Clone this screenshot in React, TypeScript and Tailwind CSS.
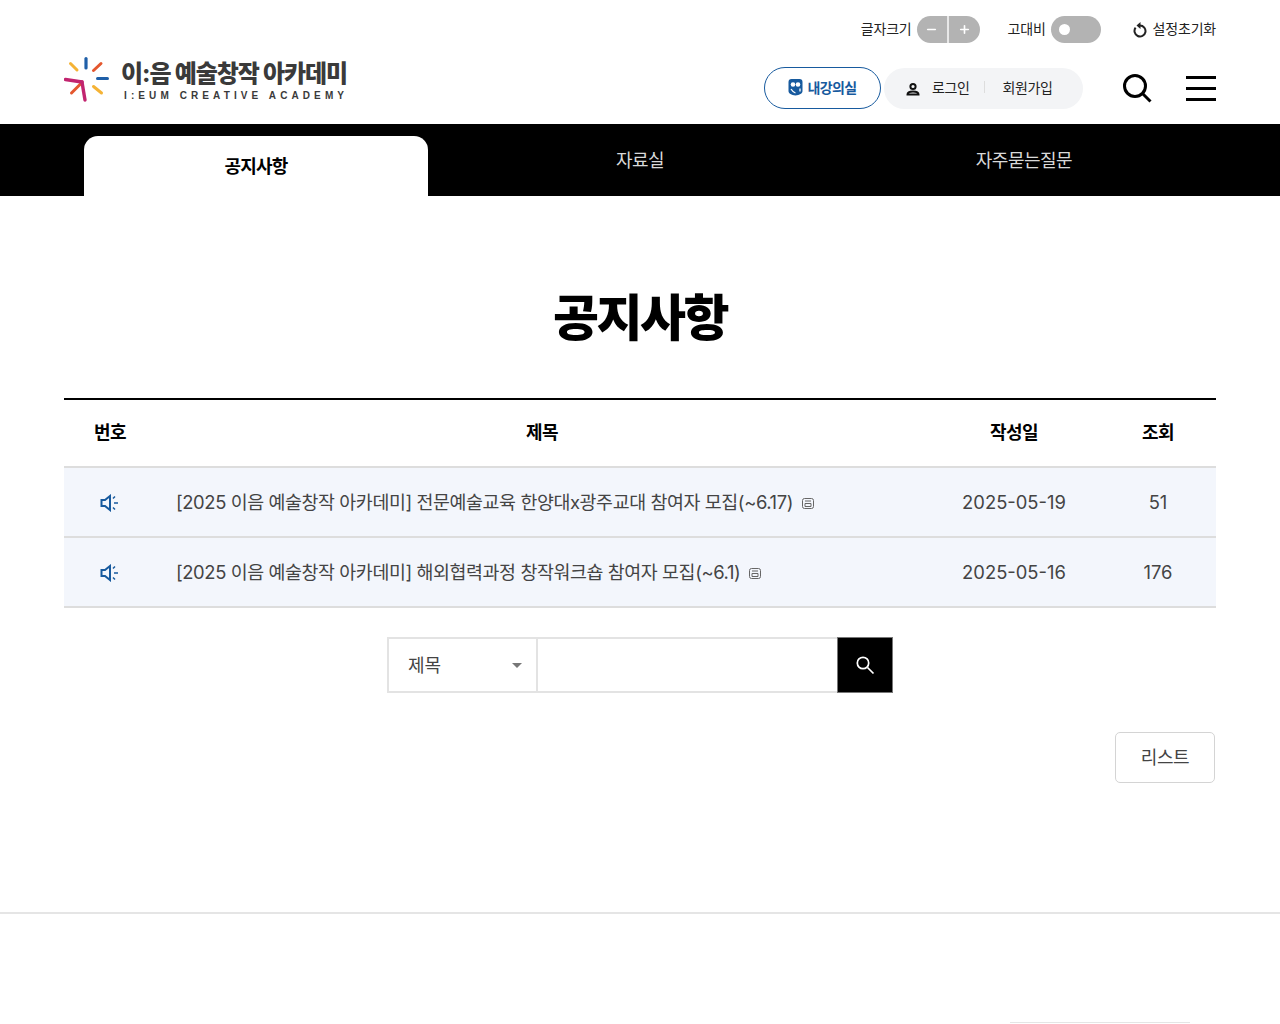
import { Minus, Plus } from 'lucide-react';

const font = { fontFamily: 'Inter, "Noto Sans CJK KR", sans-serif' };

const rows = [
  { title: '[2025 이음 예술창작 아카데미] 전문예술교육 한양대x광주교대 참여자 모집(~6.17)', date: '2025-05-19', views: '51' },
  { title: '[2025 이음 예술창작 아카데미] 해외협력과정 창작워크숍 참여자 모집(~6.1)', date: '2025-05-16', views: '176' },
];

const Logo = () => (
  <div className="flex items-start gap-[13px]">
    <svg width="45" height="46" viewBox="0 0 45 46" fill="none" strokeLinecap="round" strokeWidth="3">
      <path d="M22 2.500V12" stroke="#1f5fa8" strokeWidth="3.200" />
      <path d="M6.500 7.500l6.500 6.500" stroke="#f5b335" />
      <path d="M37 7.500l-7.500 7" stroke="#e4572e" />
      <path d="M33.500 22.500h10" stroke="#1f5fa8" />
      <path d="M29.500 30.500l8 6.500" stroke="#f5b335" />
      <path d="M7.500 37L17 27.500" stroke="#e4572e" />
      <path d="M1.500 23.500L18 26" stroke="#c2246f" strokeWidth="3.400" />
      <path d="M18 26l3 18" stroke="#c2246f" strokeWidth="3.400" />
    </svg>
    <div className="flex flex-col mt-[4px] -ml-[1px]">
      <span className="text-[24px] leading-[28px] font-extrabold tracking-[-1.050px] text-[#3a3a3a]">이:음 예술창작 아카데미</span>
      <span className="mt-[2px] pl-[3px] text-[10px] leading-[12px] font-bold tracking-[4.100px] text-[#3a3a3a] whitespace-nowrap" style={{ fontFamily: '"Liberation Sans", sans-serif' }}>
        I:EUM CREATIVE ACADEMY
      </span>
    </div>
  </div>
);

const ResetIcon = () => (
  <svg width="16" height="17" viewBox="0 0 16 17" fill="none" className="ml-[31px]">
    <path d="M8 4.500a5.500 5.500 0 1 1-4.400 2.200" stroke="#222" strokeWidth="2" />
    <path d="M8.500 1L4.500 4.500 8.500 8z" fill="#222" />
  </svg>
);

const TopBar = () => (
  <div className="flex justify-end items-center h-[27px] text-[14px] tracking-[-0.2px] text-[#222]">
    <span className="pb-[2px]">글자크기</span>
    <div className="ml-[5px] flex items-center w-[63px] h-[27px] rounded-full bg-[#b3b3b3] text-white">
      <span className="flex-1 h-full flex items-center justify-center border-r-2 border-white/70"><Minus size={13} strokeWidth={3} /></span>
      <span className="flex-1 h-full flex items-center justify-center"><Plus size={13} strokeWidth={3} /></span>
    </div>
    <span className="ml-[28px] pb-[2px]">고대비</span>
    <div className="ml-[5px] flex items-center w-[50px] h-[27px] rounded-full bg-[#b3b3b3] pl-[8px]">
      <span className="w-[11px] h-[11px] rounded-full bg-white" />
    </div>
    <ResetIcon />
    <span className="ml-[5px] pb-[2px]">설정초기화</span>
  </div>
);

const Header = () => (
  <header className="h-[124px] px-16 pt-4">
    <TopBar />
    <div className="flex items-start justify-between mt-[13px]">
      <Logo />
      <div className="flex items-center mt-[11px]">
        <button className="flex items-center justify-center w-[117px] h-[42px] pb-[2px] rounded-full border border-[#175a9e] text-[14px] font-bold tracking-[-0.6px] text-[#175a9e]">
          <svg width="15" height="18" viewBox="0 0 15 18" className="mr-[4px]">
            <path d="M3.500 1h8A3 3 0 0 1 14.500 4v9c0 2.500-3 4-7 4.500C3.500 17 .5 15.500 .5 13V4a3 3 0 0 1 3-3z" fill="#175a9e" />
            <circle cx="5" cy="6.500" r="2.300" fill="#fff" />
            <circle cx="10" cy="6.500" r="2.300" fill="#fff" />
            <path d="M3 11c1.500 2.500 3 3.500 4.500 4M12 10.500v3" stroke="#fff" strokeWidth="1.300" fill="none" />
          </svg>
          내강의실
        </button>
        <div className="ml-[3px] flex items-center w-[199px] h-[41px] pb-[2px] rounded-full bg-[#f3f4f6] pl-[22px] text-[14px] tracking-[-0.4px] text-[#222]">
          <svg width="14" height="14" viewBox="0 0 14 14" fill="none" stroke="#111" strokeWidth="2" className="mt-[3px]">
            <circle cx="7" cy="4.500" r="2.600" />
            <path d="M1.500 12.500c0-2 2-3 5.500-3s5.500 1 5.500 3z" />
          </svg>
          <span className="ml-[12px]">로그인</span>
          <span className="ml-[15px] w-px h-[12px] bg-[#ddd]" />
          <span className="ml-[17px]">회원가입</span>
        </div>
        <svg className="ml-[39px]" width="30" height="30" viewBox="0 0 30 30" fill="none" stroke="#000" strokeWidth="3">
          <circle cx="13" cy="13" r="10.500" />
          <path d="M20.500 20.500L28.500 28.500" />
        </svg>
        <div className="ml-[34px] flex flex-col gap-[8px] w-[30px]">
          <span className="h-[3px] bg-black" />
          <span className="h-[3px] bg-black" />
          <span className="h-[3px] bg-black" />
        </div>
      </div>
    </div>
  </header>
);

const Nav = () => (
  <nav className="h-[72px] bg-black px-16 grid grid-cols-3">
    <div className="px-5 pt-3">
      <div className="h-full rounded-t-[14px] bg-white flex items-center justify-center text-[18px] font-bold tracking-[-0.8px] text-black">공지사항</div>
    </div>
    <div className="flex justify-center pt-[25px] text-[18px] leading-[24px] tracking-[-0.5px] text-[#d9d9d9]">자료실</div>
    <div className="flex justify-center pt-[25px] text-[18px] leading-[24px] tracking-[-0.5px] text-[#d9d9d9]">자주묻는질문</div>
  </nav>
);

const Speaker = () => (
  <svg width="20" height="18" viewBox="0 0 20 18" fill="none" stroke="#175a9e" strokeWidth="2" className="mx-auto">
    <path d="M1.500 6h3.500l5-4v14l-5-4H1.500z" />
    <path d="M13 4.500l2-2M14 9h4M13 13.500l2 2" strokeWidth="1.500" />
  </svg>
);

const FileIcon = () => (
  <svg width="12" height="11" viewBox="0 0 12 11" fill="none" stroke="#666" strokeWidth="1" className="inline-block ml-[9px]">
    <rect x="0.500" y="0.500" width="11" height="10" rx="2" />
    <path d="M3 3h6M3 5.500h6v3H3z" />
  </svg>
);

const App = () => (
  <div className="min-h-[1024px] bg-white overflow-hidden" style={font}>
    <Header />
    <Nav />
    <main className="px-16">
      <h1 className="mt-[91px] text-center text-[50px] leading-[62px] font-extrabold tracking-[-2.500px] text-black">공지사항</h1>
      <div className="mt-[49px] border-t-2 border-black">
        <div className="grid grid-cols-[92px_772px_172px_116px] h-[68px] pb-[2px] items-center border-b-2 border-[#ddd] text-center text-[18px] font-bold tracking-[-0.6px] text-black">
          <span>번호</span>
          <span>제목</span>
          <span>작성일</span>
          <span>조회</span>
        </div>
        {rows.map((r) => (
          <div key={r.date} className="grid grid-cols-[92px_772px_172px_116px] h-[70px] pt-[1px] items-center border-b-2 border-[#ddd] bg-[#f3f6fc] text-[18.400px] text-[#444]">
            <Speaker />
            <div className="pl-[20px] tracking-[-0.4px] whitespace-nowrap">
              {r.title}
              <FileIcon />
            </div>
            <span className="text-center">{r.date}</span>
            <span className="text-center">{r.views}</span>
          </div>
        ))}
      </div>
      <div className="mt-[29px] flex justify-center">
        <div className="flex w-[506px] h-[56px]">
          <div className="w-[151px] border-2 border-[#e3e3e3] flex items-center justify-between pl-[19px] pr-[14px] text-[18px] text-[#444]">
            <span>제목</span>
            <span className="w-0 h-0 border-x-[5px] border-x-transparent border-t-[5px] border-t-[#777]" />
          </div>
          <div className="w-[299px] border-y-2 border-[#e3e3e3]" />
          <button className="w-[56px] bg-black border border-[#777] flex items-center justify-center">
            <svg width="20" height="20" viewBox="0 0 20 20" fill="none" stroke="#fff" strokeWidth="1.700">
              <circle cx="8" cy="8" r="5.700" />
              <path d="M12.500 12.500L18.500 18.500" />
            </svg>
          </button>
        </div>
      </div>
      <div className="mt-[39px] flex justify-end pr-px">
        <button className="w-[100px] h-[51px] rounded-[5px] border border-[#d4d4d4] text-[18px] tracking-[-0.4px] text-[#444]">리스트</button>
      </div>
    </main>
    <footer className="mt-[129px] border-t-2 border-[#e5e5e5] h-[111px] flex justify-end items-end pr-[90px]">
      <div className="w-[180px] h-px bg-[#e5e5e5]" />
    </footer>
  </div>
);

export default App;
